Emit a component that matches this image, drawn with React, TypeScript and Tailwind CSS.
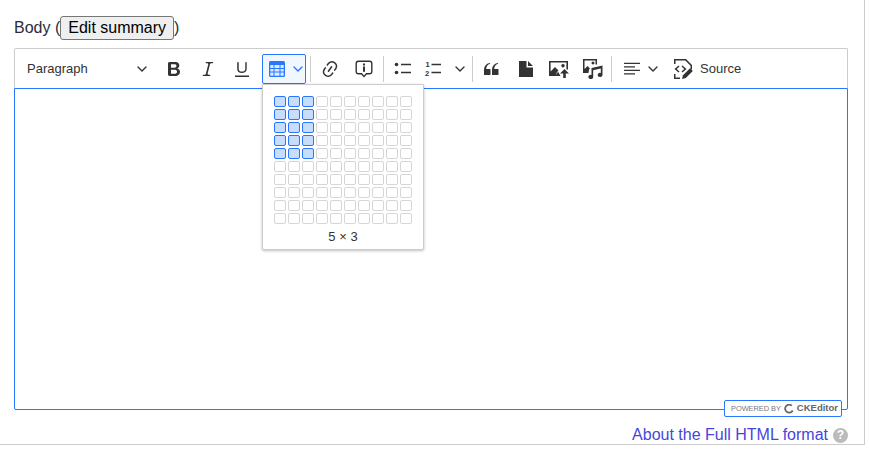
import { ReactNode } from "react";

const BOLD =
  "M10.187 17H5.773c-.637 0-1.092-.138-1.364-.415-.273-.277-.409-.718-.409-1.323V4.738c0-.617.14-1.062.419-1.332.279-.27.73-.406 1.354-.406h4.68c.69 0 1.288.041 1.793.124.506.083.96.242 1.36.478.341.197.644.447.906.75a3.262 3.262 0 0 1 .808 2.162c0 1.401-.722 2.426-2.167 3.075C15.05 10.175 16 11.315 16 13.01a3.756 3.756 0 0 1-2.296 3.504 6.1 6.1 0 0 1-1.517.377c-.571.073-1.238.11-2 .11zm-.217-6.217H7v4.087h3.069c1.977 0 2.965-.69 2.965-2.072 0-.707-.256-1.22-.768-1.537-.512-.319-1.277-.478-2.296-.478zM7 5.13v3.619h2.606c.729 0 1.292-.067 1.69-.2a1.6 1.6 0 0 0 .91-.765c.165-.267.247-.566.247-.897 0-.707-.26-1.176-.778-1.409-.519-.232-1.31-.348-2.375-.348H7z";
const ITALIC =
  "m9.586 14.633.021.004c-.036.335.095.655.393.962.082.083.173.15.274.201h1.474a.6.6 0 1 1 0 1.2H5.304a.6.6 0 0 1 0-1.2h1.15c.474-.07.809-.182 1.005-.334.157-.122.291-.32.404-.597l2.416-9.55a1.053 1.053 0 0 0-.281-.823 1.12 1.12 0 0 0-.442-.296H8.15a.6.6 0 0 1 0-1.2h6.443a.6.6 0 1 1 0 1.2h-1.195c-.376.056-.65.155-.823.296-.215.175-.423.439-.623.79l-2.366 9.347z";
const UNDERLINE =
  "M3 18v-1.5h14V18zm2.2-8V3.6c0-.4.4-.6.8-.6.3 0 .7.2.7.6v6.2c0 2 1.3 2.8 3.2 2.8 1.9 0 3.4-.9 3.4-2.9V3.6c0-.3.4-.5.8-.5.3 0 .6.2.6.5V10c0 2.7-2.2 4-4.9 4-2.6 0-4.6-1.3-4.6-4z";
const LINK =
  "m11.077 15 .991-1.416a.75.75 0 1 1 1.229.86l-1.148 1.64a.748.748 0 0 1-.217.206 5.251 5.251 0 0 1-8.503-5.955.741.741 0 0 1 .12-.274l1.147-1.639a.75.75 0 1 1 1.228.86L4.933 10.7l.006.003a3.75 3.75 0 0 0 6.132 4.294l.006.004zm5.494-5.335a.748.748 0 0 1-.12.274l-1.147 1.639a.75.75 0 1 1-1.228-.86l.86-1.23a3.75 3.75 0 0 0-6.144-4.301l-.86 1.229a.75.75 0 0 1-1.229-.86l1.148-1.64a.748.748 0 0 1 .217-.206 5.251 5.251 0 0 1 8.503 5.955zm-4.563-2.532a.75.75 0 0 1 .184 1.045l-3.155 4.505a.75.75 0 1 1-1.229-.86l3.155-4.506a.75.75 0 0 1 1.045-.184z";
const QUOTE =
  "M3 10.423a6.5 6.5 0 0 1 6.056-6.408l.038.67C6.448 5.423 5.354 7.663 5.22 10H9c.552 0 .5.432.5.986v4.511c0 .554-.448.503-1 .503h-5c-.552 0-.5-.449-.5-1.003v-4.574zm8 0a6.5 6.5 0 0 1 6.056-6.408l.038.67c-2.646.739-3.74 2.979-3.873 5.315H17c.552 0 .5.432.5.986v4.511c0 .554-.448.503-1 .503h-5c-.552 0-.5-.449-.5-1.003v-4.574z";

function Icon({ children, size = 20 }: { children: ReactNode; size?: number }) {
  return (
    <svg width={size} height={size} viewBox="0 0 20 20" fill="#333333" className="shrink-0">
      {children}
    </svg>
  );
}

function Chevron({ color = "#333333" }: { color?: string }) {
  return (
    <svg width="10" height="10" viewBox="0 0 10 10" fill="none" className="shrink-0">
      <path d="M1 3l4 4 4-4" stroke={color} strokeWidth="1.4" strokeLinecap="round" strokeLinejoin="round" />
    </svg>
  );
}

function Sep() {
  return <span className="w-px h-[26px] bg-[#cccccc] shrink-0 mx-[1px]" />;
}

function Btn({ children, width = "w-[34px]" }: { children: ReactNode; width?: string }) {
  return <span className={`h-[30px] flex items-center justify-center shrink-0 ${width}`}>{children}</span>;
}

const ROWS = Array.from({ length: 10 }, (_, r) => r);
const COLS = Array.from({ length: 10 }, (_, c) => c);

function TablePicker() {
  return (
    <div className="absolute left-[248px] top-[36px] w-[162px] h-[166px] bg-white border border-[#cccccc] rounded-b-[2px] shadow-[0_1px_3px_rgba(0,0,0,0.25)] z-10 flex flex-col items-center pt-[11px]">
      <div className="grid grid-cols-[repeat(10,12px)] auto-rows-[11px] gap-x-[2px] gap-y-[2px]">
        {ROWS.map((r) =>
          COLS.map((c) =>
            r < 5 && c < 3 ? (
              <span key={`${r}-${c}`} className="rounded-[2px] border border-[#2977ff] bg-[#c7ddfb]" />
            ) : (
              <span key={`${r}-${c}`} className="rounded-[2px] border border-[#d6d6d6] bg-white" />
            ),
          ),
        )}
      </div>
      <span className="text-[13px] leading-[15px] text-[#333333] mt-[5px]">5 × 3</span>
    </div>
  );
}

export default function App() {
  return (
    <div className="w-[869px] h-[451px] bg-white font-['Liberation_Sans',Arial,sans-serif]">
      <div className="w-[865px] h-[445px] border-r border-b border-[#cccccc] pl-[14px] pr-[16px] pt-[16px]">
        <div className="h-[32px] flex items-start text-[16px] text-[#2b2b3a] leading-[24px]">
          <span>Body (</span>
          <button className="h-[24px] px-[7px] text-[16px] leading-[20px] text-black bg-[#efefef] border border-[#767676] rounded-[3px]">
            Edit summary
          </button>
          <span>)</span>
        </div>

        <div className="relative w-[834px]">
          <div className="h-[40px] border border-b-0 border-[#cccccc] rounded-t-[2px] flex items-center pl-[5px] bg-white">
            <span className="w-[137px] h-[30px] flex items-center justify-between pl-[7px] pr-[10px] text-[13px] text-[#333333] shrink-0">
              Paragraph
              <Chevron />
            </span>
            <Btn><Icon><path d={BOLD} /></Icon></Btn>
            <Btn><Icon><path d={ITALIC} /></Icon></Btn>
            <Btn><Icon><path d={UNDERLINE} /></Icon></Btn>
            <span className="ml-[3px] w-[44px] h-[30px] flex items-center pl-[4px] gap-[6px] bg-[#f0f7ff] border border-[#2977ff] rounded-[2px] shrink-0">
              <Icon>
                <path
                  d="M3.5 2h13A1.5 1.5 0 0 1 18 3.5v13a1.5 1.5 0 0 1-1.5 1.5h-13A1.5 1.5 0 0 1 2 16.500v-13A1.5 1.500 0 0 1 3.500 2z"
                  fill="#2977ff"
                />
                <path
                  d="M3.300 6h3.200v3H3.300zM7.500 6h5v3h-5zM13.500 6h3.200v3h-3.200zM3.300 10h3.200v2.500H3.300zM7.500 10h5v2.500h-5zM13.500 10h3.200v2.500h-3.200zM3.300 13.500h3.200v3.200H3.300zM7.500 13.500h5v3.200h-5zM13.500 13.500h3.200v3.200h-3.200z"
                  fill="#dcebff"
                />
              </Icon>
              <Chevron color="#2977ff" />
            </span>
            <span className="w-[3px] shrink-0" />
            <Sep />
            <span className="w-[1px] shrink-0" />
            <Btn><Icon><path d={LINK} /></Icon></Btn>
            <Btn>
              <Icon>
                <path
                  fillRule="evenodd"
                  d="M4.500 1.500h11a3 3 0 0 1 3 3v8a3 3 0 0 1-3 3h-2.800L10 18.500 7.300 15.500H4.500a3 3 0 0 1-3-3v-8a3 3 0 0 1 3-3zm0 1.400a1.600 1.600 0 0 0-1.600 1.600v8c0 .9.700 1.600 1.600 1.600h3.400L10 16.400l2.100-2.300h3.400c.9 0 1.600-.7 1.600-1.600v-8c0-.9-.7-1.600-1.600-1.600z"
                />
                <path d="M9 4.500h2v1.900H9zM9 7.500h2v5.200H9z" />
              </Icon>
            </Btn>
            <span className="w-[1px] shrink-0" />
            <Sep />
            <span className="w-[1px] shrink-0" />
            <Btn width="w-[33px]">
              <Icon>
                <circle cx="3.500" cy="5.500" r="1.800" />
                <circle cx="3.500" cy="13.500" r="1.800" />
                <path d="M8 4.800h10v1.400H8zM8 12.800h10v1.400H8z" />
              </Icon>
            </Btn>
            <span className="w-[52px] h-[30px] flex items-center pl-[4px] gap-[12px] shrink-0">
              <Icon>
                <path d="M8.500 4.800H18v1.400H8.500zM8.500 12.800H18v1.400H8.500z" />
                <text x="2.500" y="8" fontSize="7.500" fontWeight="700" fontFamily="Liberation Sans">1</text>
                <text x="2" y="17" fontSize="7.500" fontWeight="700" fontFamily="Liberation Sans">2</text>
              </Icon>
              <Chevron />
            </span>
            <Sep />
            <Btn><Icon><path d={QUOTE} /></Icon></Btn>
            <Btn>
              <Icon>
                <path d="M4 2h7.500v6.500H18V18H4zM13 2l5 5h-5z" />
              </Icon>
            </Btn>
            <Btn>
              <Icon>
                <path
                  fillRule="evenodd"
                  d="M0 2h19v8.500h-1.600V3.600H1.600v8.900L6 8l3.500 3.500-1.700 1.800L7 17H0zM14 5a1.700 1.700 0 1 1-.01 0z"
                />
                <path d="M15.500 10l4.500 4.500h-3.200V19h-2.600v-4.500H11z" />
                <path d="M6.500 17l2.500-4.500L11.500 17z" />
              </Icon>
            </Btn>
            <Btn>
              <Icon>
                <path
                  fillRule="evenodd"
                  d="M0 0h14v5.500h-1.500V1.500h-11V10L4.500 7l2.500 2.500-1 1-.5 3.500H0zM10 2.500a1.500 1.500 0 1 1-.01 0z"
                />
                <path d="M8.500 9L19.500 6.500v9.500a2.400 2.100 0 1 1-1.700-2V9.500l-7.600 1.700V18a2.400 2.100 0 1 1-1.700-2z" />
              </Icon>
            </Btn>
            <Sep />
            <span className="w-[50px] h-[30px] flex items-center pl-[9px] gap-[6px] shrink-0">
              <Icon>
                <path d="M2 3.700h16v1.400H2zM2 7.200h11v1.400H2zM2 10.700h16v1.400H2zM2 14.200h11v1.400H2z" />
              </Icon>
              <Chevron />
            </span>
            <span className="h-[30px] flex items-center gap-[7px] pl-[10px] text-[13px] text-[#333333] shrink-0">
              <Icon>
                <path d="M1 0h12l6 6v4.500h-1.500V6.700L12.300 1.500H2.500V5H1zM1 15h1.500v3.500H7V20H1z" />
                <path d="M5.500 6.500L1.500 10l4 3.500 1-1.100L3.700 10l2.800-2.400zM9.500 6.500l-1 1.100 2.800 2.400-2.800 2.400 1 1.100 4-3.500z" />
                <path d="M9 20l1-3.800 7-7 2.800 2.800-7 7z" />
              </Icon>
              Source
            </span>
          </div>

          <div className="relative h-[322px] border border-[#2977ff] rounded-b-[2px] bg-white">
            <span className="absolute right-[5px] bottom-[-8px] h-[17px] w-[118px] flex items-center pl-[6px] gap-[3px] bg-white border border-[#2977ff] rounded-[2px] whitespace-nowrap">
              <span className="text-[7.5px] text-[#7a7a7a] tracking-[-0.1px]">POWERED BY</span>
              <svg width="10" height="10" viewBox="0 0 10 10" fill="none" className="shrink-0">
                <path d="M7.800 1.700A4 4 0 1 0 8.700 6.500" stroke="#666666" strokeWidth="1.800" />
              </svg>
              <span className="text-[9.5px] font-bold text-[#666666]">CKEditor</span>
            </span>
          </div>

          <TablePicker />
        </div>

        <div className="flex items-center justify-end h-[20px] mt-[15px] pr-[0px] text-[16px] text-[#4646dd]">
          <a>About the Full HTML format</a>
          <span className="ml-[5px] w-[15px] h-[15px] rounded-full bg-[#bbbbbb] text-white text-[12px] font-bold leading-[15px] text-center">?</span>
        </div>
      </div>
    </div>
  );
}
